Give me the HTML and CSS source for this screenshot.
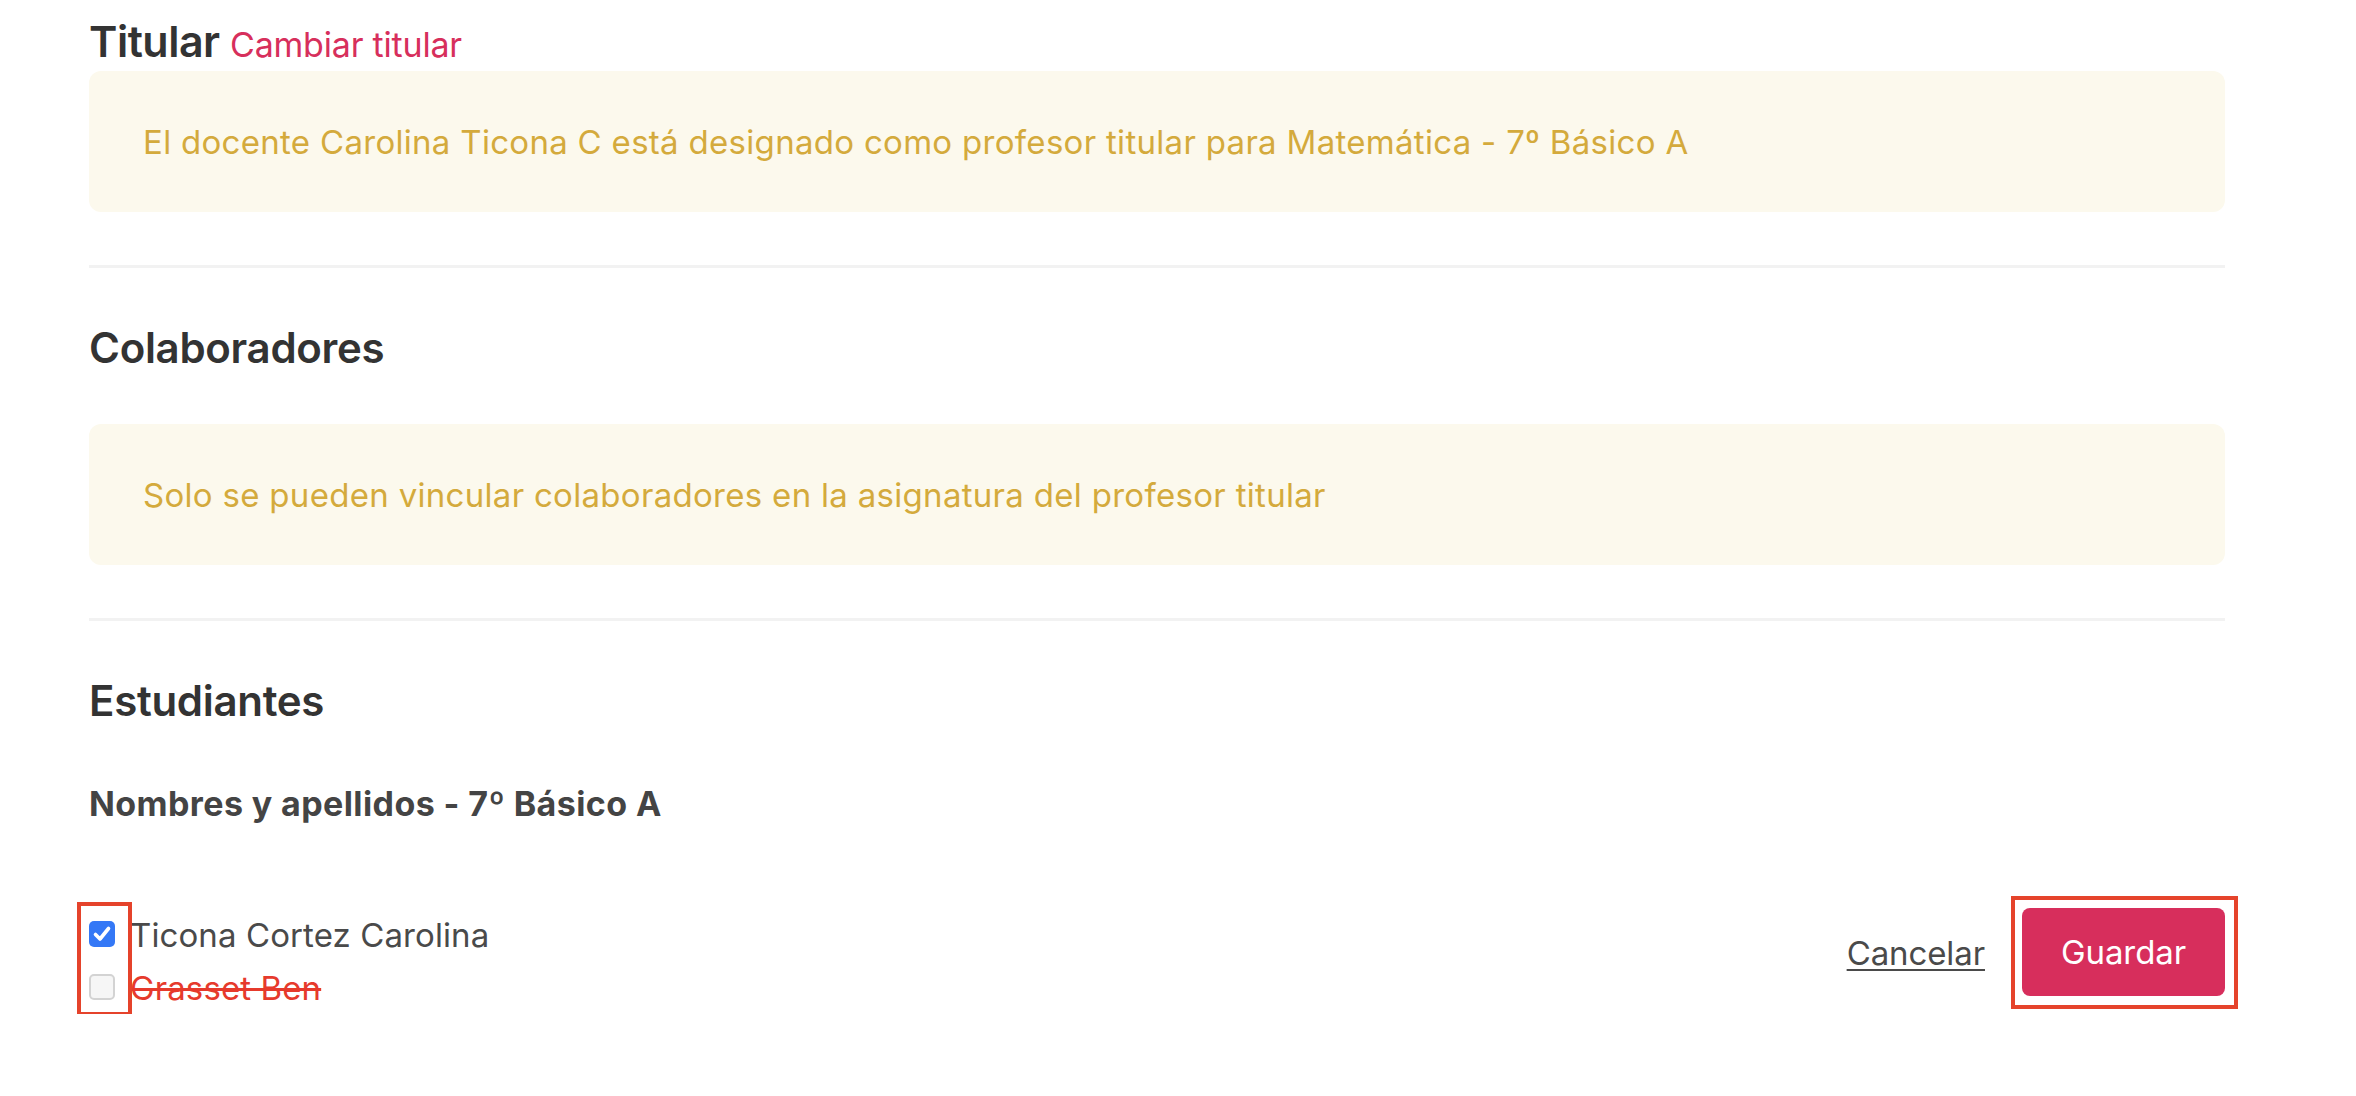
FILE: index.html
```html
<!DOCTYPE html>
<html lang="es">
<head>
<meta charset="utf-8">
<title>Asignatura</title>
<link rel="stylesheet" href="styles.css">
</head>
<body>
<main class="page">
  <section class="section">
    <h2 class="title title-first">Titular <a class="change-link" href="#">Cambiar titular</a></h2>
    <div class="notice">El docente Carolina Ticona C está designado como profesor titular para Matemática - 7º Básico A</div>
  </section>
  <hr class="divider">
  <section class="section">
    <h2 class="title">Colaboradores</h2>
    <div class="notice notice-spaced">Solo se pueden vincular colaboradores en la asignatura del profesor titular</div>
  </section>
  <hr class="divider">
  <section class="section">
    <h2 class="title">Estudiantes</h2>
    <h3 class="subtitle">Nombres y apellidos - 7º Básico A</h3>
    <div class="bottom">
      <div class="students">
        <span class="annot annot-checks"></span>
        <label class="student">
          <span class="check checked">
            <svg viewBox="0 0 26 26" width="26" height="26"><path d="M6.5 13.5 L11 18 L19.5 7.5" fill="none" stroke="#fff" stroke-width="3.6" stroke-linecap="round" stroke-linejoin="round"/></svg>
          </span>
          <span class="name">Ticona Cortez Carolina</span>
        </label>
        <label class="student">
          <span class="check"></span>
          <span class="name removed">Grasset Ben</span>
        </label>
      </div>
      <div class="actions">
        <a class="cancel" href="#">Cancelar</a>
        <span class="annot-frame">
          <button class="save" type="button">Guardar</button>
        </span>
      </div>
    </div>
  </section>
</main>
</body>
</html>
```
FILE: styles.css
```css
html, body {
  margin: 0;
  padding: 0;
  background: #ffffff;
}

body {
  font-family: Inter, "Noto Sans", "Liberation Sans", sans-serif;
  color: #333333;
}

.page {
  width: 2136px;
  padding: 0 131px 0 89px;
}

.section {
  display: flex;
  flex-direction: column;
}

.title {
  margin: 55px 0 0;
  font-size: 42px;
  line-height: 50px;
  font-weight: 600;
  color: #333333;
  letter-spacing: -0.3px;
}

.title-first {
  margin-top: 15px;
  font-size: 43px;
  line-height: 52px;
  height: 52px;
  letter-spacing: -0.5px;
}

.change-link {
  font-size: 34px;
  line-height: 1;
  font-weight: 400;
  color: #d72f5c;
  text-decoration: none;
  letter-spacing: -0.2px;
}

.notice {
  margin-top: 4px;
  height: 141px;
  box-sizing: border-box;
  display: flex;
  align-items: center;
  padding-left: 54px;
  background: #fcf9ed;
  border-radius: 12px;
  color: #d4aa3c;
  font-size: 33px;
  letter-spacing: 0.3px;
}

.notice-spaced {
  margin-top: 51px;
}

.divider {
  margin: 53px 0 0;
  border: 0;
  height: 3px;
  background: #f2f2f2;
}

.subtitle {
  margin: 58px 0 0;
  font-size: 34px;
  line-height: 40px;
  font-weight: 700;
  color: #444444;
  letter-spacing: 0.4px;
}

.bottom {
  margin-top: 84px;
  display: flex;
  justify-content: space-between;
  align-items: flex-start;
}

.students {
  position: relative;
  display: flex;
  flex-direction: column;
}

.student {
  display: flex;
  align-items: center;
  height: 53px;
  gap: 15px;
  font-size: 33px;
  color: #4a4a4a;
}

.check {
  width: 26px;
  height: 26px;
  box-sizing: border-box;
  border-radius: 5px;
  border: 2px solid #d3d3d3;
  background: #f6f6f6;
  display: flex;
  align-items: center;
  justify-content: center;
  flex-shrink: 0;
  margin-top: -2px;
}

.check.checked {
  border: 0;
  background: #3478f6;
}

.check svg {
  display: block;
}

.name {
  letter-spacing: 0.1px;
}

.removed {
  color: #e63a2c;
  text-decoration: line-through;
  text-decoration-thickness: 3px;
}

.annot {
  position: absolute;
  box-sizing: border-box;
  border: 4px solid #e5432b;
  pointer-events: none;
}

.annot-checks {
  left: -12px;
  top: -6px;
  width: 55px;
  height: 114px;
}

.actions {
  display: flex;
  align-items: center;
  gap: 26px;
  margin-top: -12px;
  margin-right: -13px;
}

.cancel {
  font-size: 33px;
  color: #4a4a4a;
  text-decoration: underline;
  text-underline-offset: 4px;
  text-decoration-thickness: 2px;
  letter-spacing: -0.1px;
}

.annot-frame {
  display: flex;
  padding: 8px 9px 9px 7px;
  border: 4px solid #e5432b;
}

.save {
  width: 203px;
  height: 88px;
  border: 0;
  border-radius: 8px;
  background: #d72e5c;
  color: #ffffff;
  font-family: Inter, "Noto Sans", "Liberation Sans", sans-serif;
  font-size: 33px;
  letter-spacing: -0.1px;
  cursor: pointer;
}
```
